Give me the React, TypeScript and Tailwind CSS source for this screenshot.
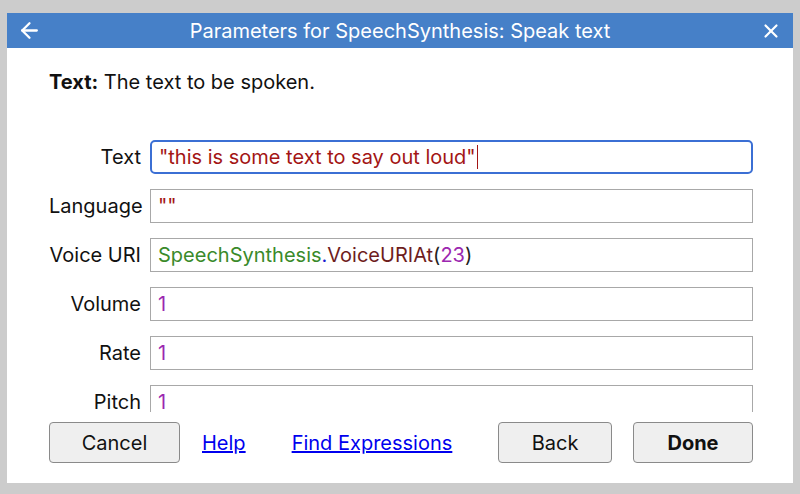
import { ArrowLeft, X } from 'lucide-react'

type Token = { t: string; c: string }

const STR = 'text-[#a31515]'
const NUM = 'text-[#9c27b0]'

const rows: { label: string; tokens: Token[]; focused?: boolean }[] = [
  { label: 'Text', tokens: [{ t: '"this is some text to say out loud"', c: STR }], focused: true },
  { label: 'Language', tokens: [{ t: '""', c: STR }] },
  {
    label: 'Voice URI',
    tokens: [
      { t: 'SpeechSynthesis', c: 'text-[#3a8a2a]' },
      { t: '.', c: 'text-[#1a1ad0]' },
      { t: 'VoiceURIAt', c: 'text-[#6e1d1d]' },
      { t: '(', c: 'text-[#222]' },
      { t: '23', c: NUM },
      { t: ')', c: 'text-[#222]' },
    ],
  },
  { label: 'Volume', tokens: [{ t: '1', c: NUM }] },
  { label: 'Rate', tokens: [{ t: '1', c: NUM }] },
  { label: 'Pitch', tokens: [{ t: '1', c: NUM }] },
]

function Button({ children, bold }: { children: string; bold?: boolean }) {
  return (
    <button
      className={`h-[41px] rounded-[4px] border border-[#8a8a8a] bg-[#efefef] text-[20px] text-[#111] ${
        bold ? 'font-bold' : ''
      }`}
    >
      {children}
    </button>
  )
}

export default function App() {
  return (
    <div
      className="w-[800px] h-[494px] bg-[#cccccc] overflow-hidden px-[7px] pt-[13px]"
      style={{ fontFamily: 'Inter, "Liberation Sans", sans-serif' }}
    >
      <div className="flex flex-col h-[470px] bg-white">
        <div className="h-[35px] bg-[#4680c8] flex items-center text-white shrink-0">
          <div className="w-[44px] flex justify-center">
            <ArrowLeft size={25} strokeWidth={2.2} />
          </div>
          <div className="flex-1 text-center text-[20px] leading-none">
            Parameters for SpeechSynthesis: Speak text
          </div>
          <div className="w-[44px] flex justify-center">
            <X size={22} strokeWidth={2.4} />
          </div>
        </div>

        <div className="pl-[42px] pr-[40px] flex flex-col flex-1">
          <div className="pt-[22px] text-[20px] leading-[24px] text-[#111]">
            <span className="font-bold">Text:</span> The text to be spoken.
          </div>

          <div className="mt-[46px] h-[272px] overflow-hidden flex flex-col gap-[15px]">
            {rows.map((row) => (
              <div key={row.label} className="flex items-center gap-[9px] shrink-0">
                <div className="w-[92px] text-right text-[20px] text-[#111]">{row.label}</div>
                <div
                  className={`flex-1 h-[34px] flex items-center px-[7px] text-[20px] bg-white ${
                    row.focused
                      ? 'border-2 border-[#3b6fd4] rounded-[5px] px-[6px]'
                      : 'border border-[#a8a8a8]'
                  }`}
                >
                  {row.tokens.map((tok, i) => (
                    <span key={i} className={tok.c}>
                      {tok.t}
                    </span>
                  ))}
                  {row.focused && <span className="w-px h-[24px] bg-[#a31515] ml-[1px]" />}
                </div>
              </div>
            ))}
          </div>

          <div className="mt-[10px] flex items-center">
            <div className="w-[131px] flex flex-col">
              <Button>Cancel</Button>
            </div>
            <a href="#" className="ml-[22px] text-[20px] text-[#0000ee] underline">
              Help
            </a>
            <a href="#" className="ml-[46px] text-[20px] text-[#0000ee] underline">
              Find Expressions
            </a>
            <div className="ml-auto w-[114px] flex flex-col">
              <Button>Back</Button>
            </div>
            <div className="ml-[21px] w-[120px] flex flex-col">
              <Button bold>Done</Button>
            </div>
          </div>
        </div>
      </div>
    </div>
  )
}
